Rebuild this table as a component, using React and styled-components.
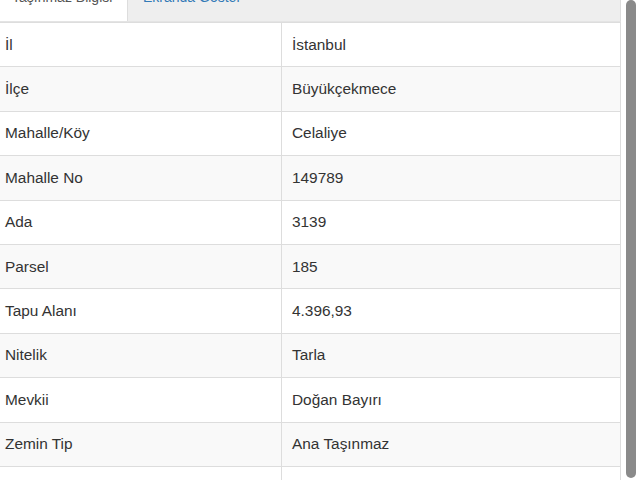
import React from "react";
import styled, { createGlobalStyle } from "styled-components";

const Global = createGlobalStyle`
  html, body { margin: 0; padding: 0; background: #fff; overflow: hidden; }
  body { font-family: "Liberation Sans", Arial, sans-serif; color: #333; }
`;

const Page = styled.div`
  display: flex;
  width: 640px;
  height: 480px;
  overflow: hidden;
`;

const Content = styled.div`
  width: 621px;
  display: flex;
  flex-direction: column;
`;

const TabStrip = styled.div`
  display: flex;
  margin-top: -25px;
  background: #eee;
  border-bottom: 1px solid #e4e4e4;
  border-right: 1px solid #ddd;
`;

const Tab = styled.div`
  height: 46px;
  box-sizing: border-box;
  padding: 12px 12px 0 ${(p) => (p.$active ? "12px" : "15px")};
  font-size: 14px;
  line-height: 20px;
  background: ${(p) => (p.$active ? "#fff" : "transparent")};
  color: ${(p) => (p.$active ? "#555" : "#337ab7")};
  width: ${(p) => p.$w}px;
  border-right: ${(p) => (p.$active ? "1px solid #ddd" : "none")};
`;

const Table = styled.table`
  border-collapse: collapse;
  width: 621px;
  font-size: 15.4px;
  table-layout: fixed;
`;

const Row = styled.tr`
  height: 44.4px;
  background: ${(p) => (p.$striped ? "#f9f9f9" : "#fff")};
`;

const Cell = styled.td`
  border: 1px solid #ddd;
  border-left: ${(p) => (p.$first ? "none" : "1px solid #ddd")};
  padding: 0 0 0 ${(p) => (p.$first ? "5px" : "10px")};
  vertical-align: middle;
  width: ${(p) => (p.$first ? "276px" : "auto")};
  color: #333;
  white-space: nowrap;
`;

const ScrollTrack = styled.div`
  width: 19px;
  display: flex;
  padding: 0 4px 2px 5px;
  box-sizing: border-box;
`;

const Thumb = styled.div`
  flex: 1;
  background: #8a8a8a;
  border-radius: 5px;
`;

const rows = [
  ["İl", "İstanbul"],
  ["İlçe", "Büyükçekmece"],
  ["Mahalle/Köy", "Celaliye"],
  ["Mahalle No", "149789"],
  ["Ada", "3139"],
  ["Parsel", "185"],
  ["Tapu Alanı", "4.396,93"],
  ["Nitelik", "Tarla"],
  ["Mevkii", "Doğan Bayırı"],
  ["Zemin Tip", "Ana Taşınmaz"],
  ["Pafta", "F21-D-22-C"],
];

export default function App() {
  return (
    <>
      <Global />
      <Page>
        <Content>
          <TabStrip>
            <Tab $active $w={128}>Taşınmaz Bilgisi</Tab>
            <Tab $w={140}>Ekranda Göster</Tab>
          </TabStrip>
          <Table>
            <tbody>
              {rows.map(([k, v], i) => (
                <Row key={k} $striped={i % 2 === 1}>
                  <Cell $first>{k}</Cell>
                  <Cell>{v}</Cell>
                </Row>
              ))}
            </tbody>
          </Table>
        </Content>
        <ScrollTrack>
          <Thumb />
        </ScrollTrack>
      </Page>
    </>
  );
}
